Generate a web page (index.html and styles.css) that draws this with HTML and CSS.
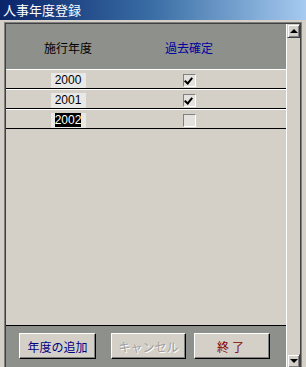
FILE: index.html
```html
<!DOCTYPE html>
<html lang="ja">
<head>
  <meta charset="UTF-8">
  <title>人事年度登録</title>
  <link rel="stylesheet" href="styles.css">
</head>
<body>

  <div class="titlebar">人事年度登録</div>

  <div class="frame">
    <div class="panel">
      <div class="list">
        <div class="head">
          <span class="col-year">施行年度</span>
          <span class="col-fixed blue">過去確定</span>
        </div>

        <div class="row">
          <span class="col-year"><span class="yearbox">2000</span></span>
          <span class="col-fixed"><span class="check on"></span></span>
        </div>
        <div class="row">
          <span class="col-year"><span class="yearbox">2001</span></span>
          <span class="col-fixed"><span class="check on"></span></span>
        </div>
        <div class="row">
          <span class="col-year"><span class="yearbox"><span class="selected">2002</span></span></span>
          <span class="col-fixed"><span class="check"></span></span>
        </div>

        <div class="empty"></div>

        <div class="footer">
          <button class="btn btn-add">年度の追加</button>
          <button class="btn btn-cancel" disabled>キャンセル</button>
          <button class="btn btn-exit">終了</button>
        </div>
      </div>

      <div class="scrollbar">
        <div class="arrow up"></div>
        <div class="track"></div>
        <div class="arrow down"></div>
      </div>
    </div>
  </div>

</body>
</html>
```

FILE: styles.css
```css
html, body {
  margin: 0;
  padding: 0;
}

body {
  width: 306px;
  height: 367px;
  overflow: hidden;
  background-color: #d4d0c8;
  font-family: "Noto Sans CJK JP", "Liberation Sans", sans-serif;
  font-size: 12px;
}

.titlebar {
  height: 20px;
  line-height: 20px;
  padding-left: 3px;
  color: white;
  font-size: 13px;
  background: linear-gradient(to right, #0a246a 0%, #3a6ea5 50%, #a6caf0 100%);
}

.frame {
  padding: 2px 4px 0 4px;
}

.panel {
  display: flex;
  height: 345px;
  border: 1px solid #808080;
  border-bottom: none;
  box-shadow: inset 1px 1px 0 #404040, inset -1px 0 0 #404040;
  padding: 1px 1px 0 1px;
}

.list {
  width: 280px;
  display: flex;
  flex-direction: column;
}

.head {
  height: 45px;
  display: grid;
  grid-template-columns: 124px 118px 1fr;
  align-items: center;
  background-color: #8e908c;
}

.head span {
  text-align: center;
  padding-top: 2px;
}

.blue {
  color: #0000a0;
}

.row {
  height: 18px;
  display: grid;
  grid-template-columns: 124px 118px 1fr;
  align-items: center;
  border-top: 1px solid white;
  border-bottom: 1px solid black;
}

.col-year,
.col-fixed {
  display: flex;
  justify-content: center;
}

.yearbox {
  width: 35px;
  height: 15px;
  margin-top: 2px;
  background-color: #e8e8e6;
  font-family: "Liberation Sans", sans-serif;
  font-size: 12px;
  line-height: 15px;
  text-align: center;
}

.selected {
  background-color: black;
  color: white;
}

.check {
  position: relative;
  width: 11px;
  height: 11px;
  margin-top: 2px;
  margin-left: 1px;
  border: 1px solid;
  border-color: #808080 white white #808080;
  background-color: #e4e2de;
}

.check.on::after {
  content: "";
  position: absolute;
  left: 2px;
  top: 1px;
  width: 3px;
  height: 6px;
  border-right: 2px solid black;
  border-bottom: 2px solid black;
  transform: rotate(40deg);
}

.empty {
  flex: 1;
}

.footer {
  height: 43px;
  border-top: 1px solid black;
  background-color: #8e908c;
  display: flex;
  align-items: flex-start;
  padding: 7px 0 0 13px;
  box-sizing: border-box;
  height: 44px;
}

.btn {
  height: 26px;
  padding: 0;
  font-family: "Noto Sans CJK JP", sans-serif;
  font-size: 12px;
  background-color: #d4d0c8;
  border: 1px solid;
  border-color: white black black white;
  box-shadow: inset -1px -1px 0 #808080;
}

.btn-add {
  width: 77px;
  color: #000080;
}

.btn-cancel {
  width: 75px;
  margin-left: 15px;
  color: #a0a0a0;
  text-shadow: 1px 1px 0 white;
}

.btn-exit {
  width: 76px;
  margin-left: 8px;
  color: #800000;
  letter-spacing: 3px;
}

.scrollbar {
  width: 13px;
  display: flex;
  flex-direction: column;
  border-left: 1px solid white;
  background-color: #d4d0c8;
}

.arrow {
  height: 14px;
  box-sizing: border-box;
  border: 1px solid;
  border-color: #d4d0c8 #404040 #404040 #d4d0c8;
  box-shadow: inset 1px 1px 0 white, inset -1px -1px 0 #808080;
  display: flex;
  align-items: center;
  justify-content: center;
}

.arrow::after {
  content: "";
  width: 0;
  height: 0;
  border-left: 4px solid transparent;
  border-right: 4px solid transparent;
}

.arrow.up::after {
  border-bottom: 4px solid black;
}

.arrow.down::after {
  border-top: 4px solid black;
}

.track {
  flex: 1;
}

.scrollbar .down {
  margin-bottom: 1px;
}
```
